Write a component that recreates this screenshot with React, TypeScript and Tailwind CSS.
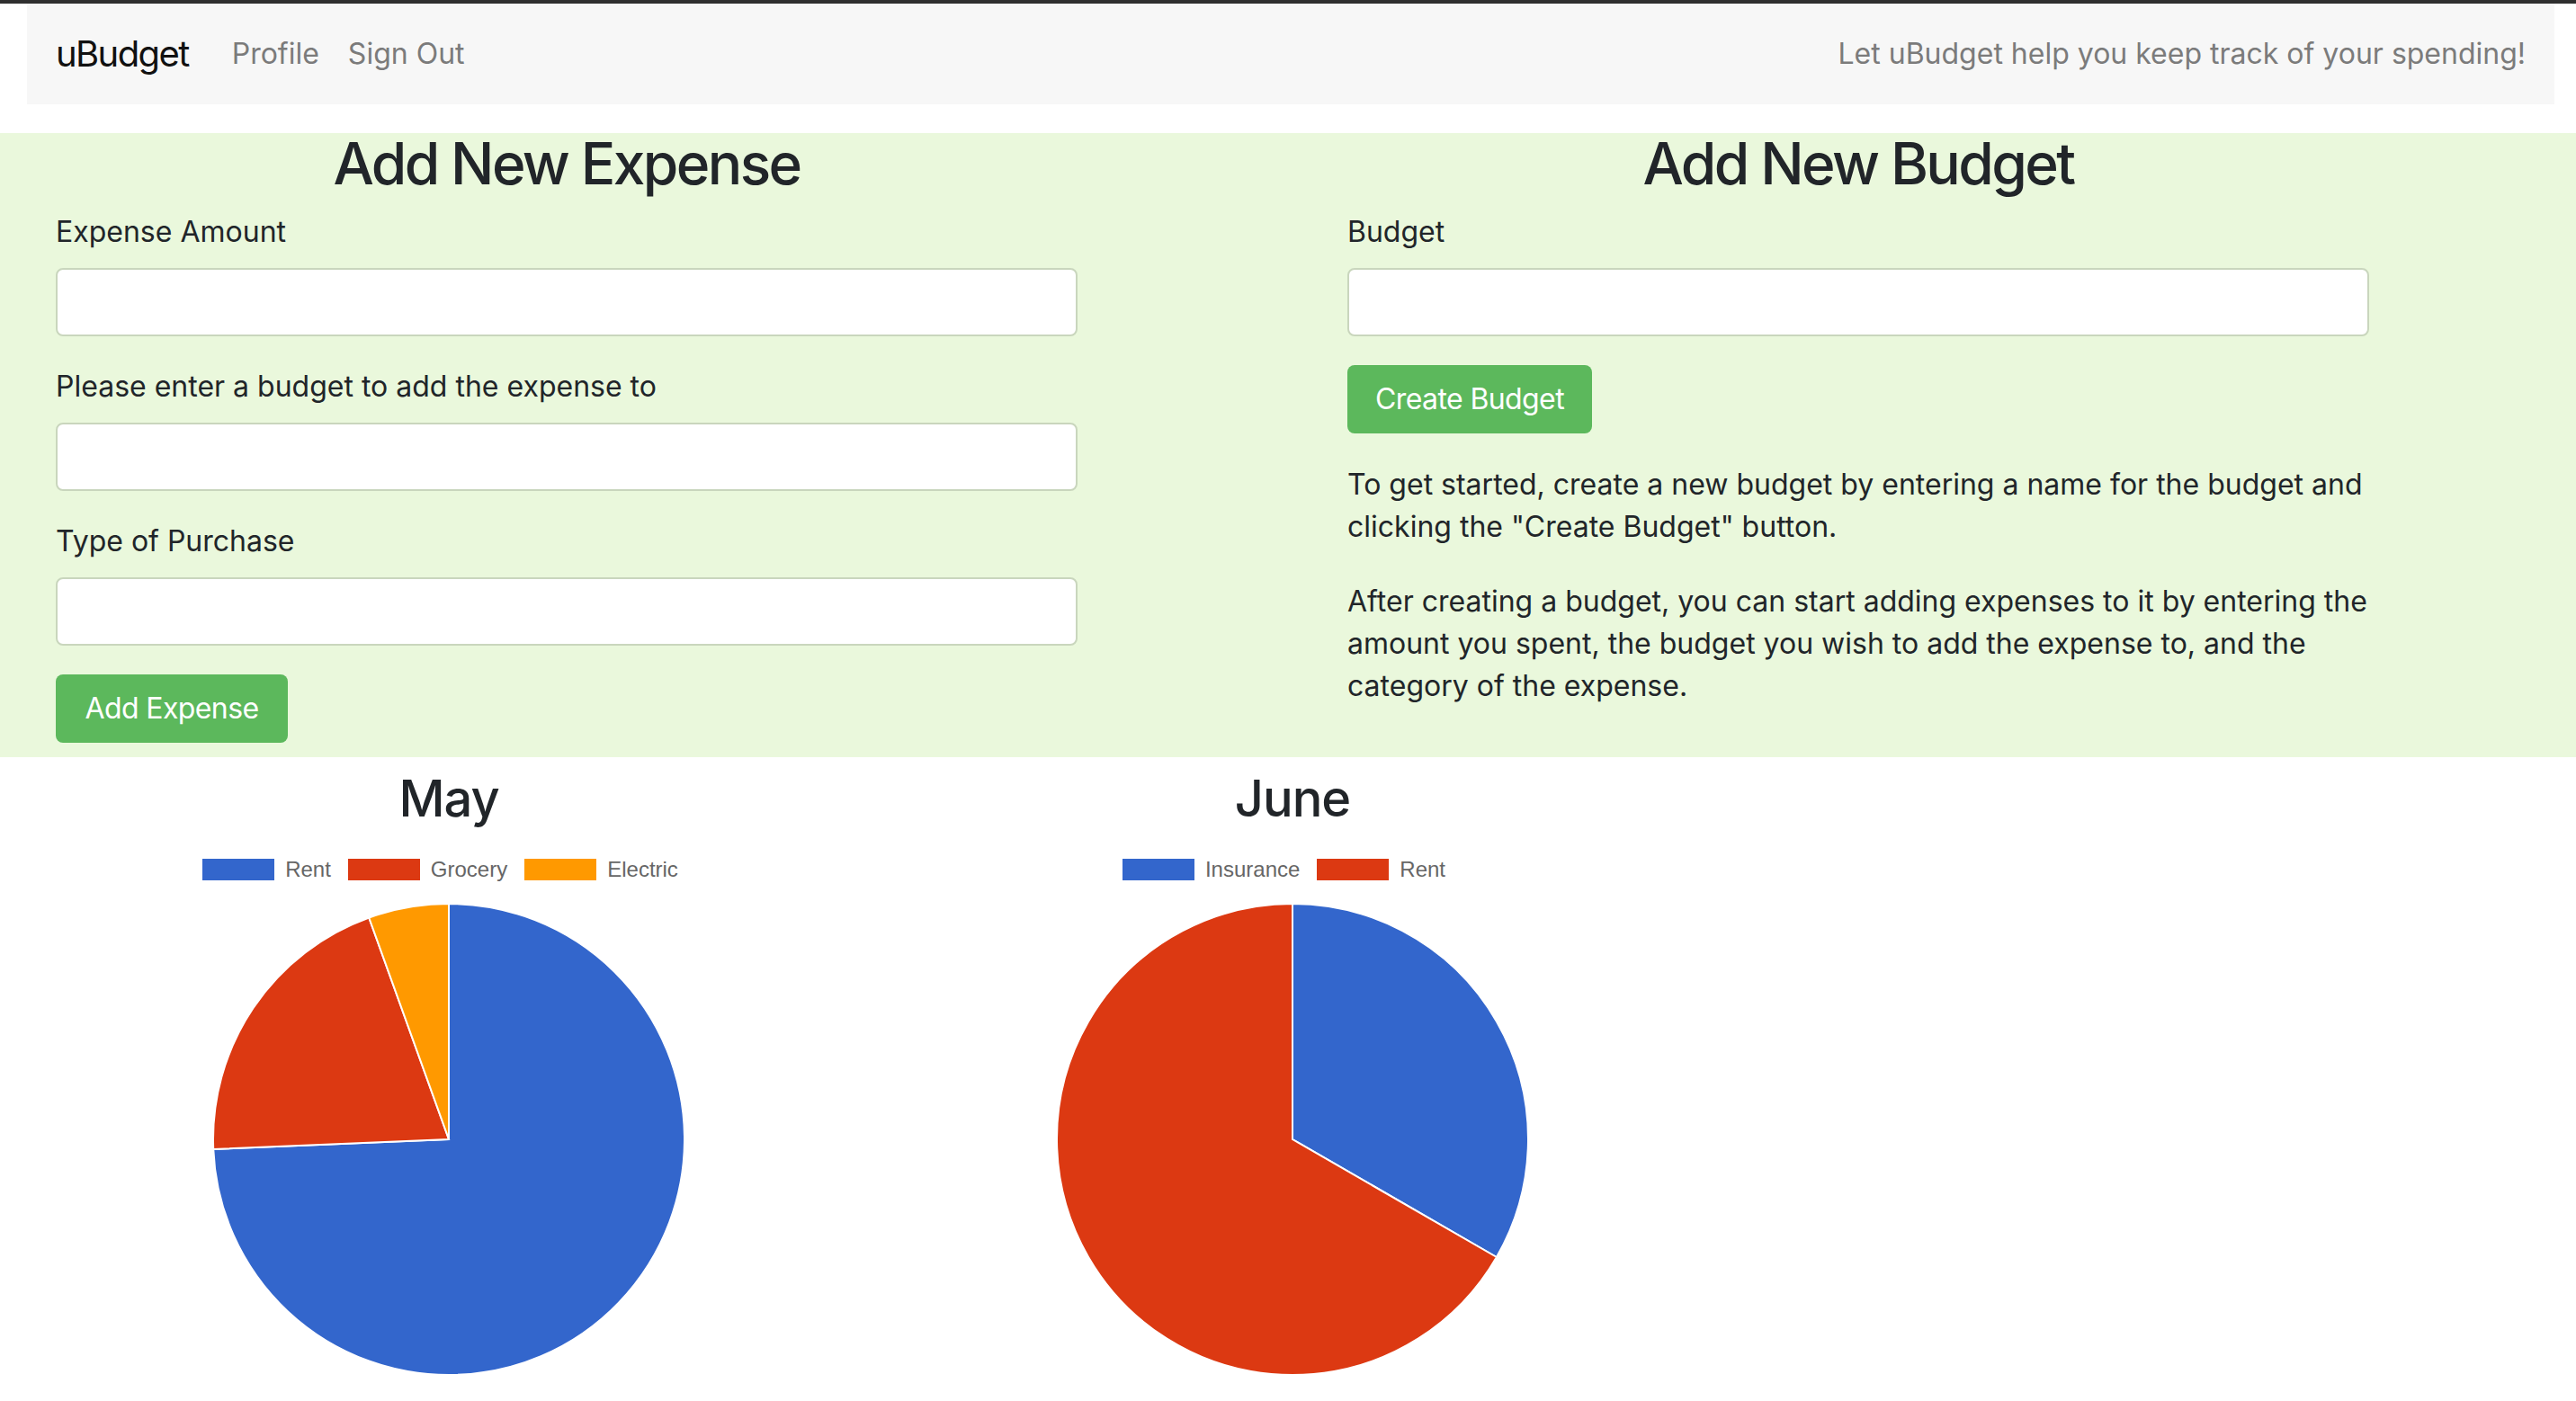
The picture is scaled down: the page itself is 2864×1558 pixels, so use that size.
import React from "react";

type Slice = { label: string; value: number; color: string };

type Chart = { title: string; slices: Slice[] };

const charts: Chart[] = [
  {
    title: "May",
    slices: [
      { label: "Rent", value: 1500, color: "#3366cc" },
      { label: "Grocery", value: 407, color: "#dc3912" },
      { label: "Electric", value: 111, color: "#ff9900" },
    ],
  },
  {
    title: "June",
    slices: [
      { label: "Insurance", value: 500, color: "#3366cc" },
      { label: "Rent", value: 1000, color: "#dc3912" },
    ],
  },
];

const font = { fontFamily: "Inter, 'Noto Sans', sans-serif" };

// point on the circle, angle clockwise from 12 o'clock
const pt = (cx: number, cy: number, r: number, deg: number) => {
  const a = (deg * Math.PI) / 180;
  return [cx + r * Math.sin(a), cy - r * Math.cos(a)];
};

const slicePath = (cx: number, cy: number, r: number, a0: number, a1: number) => {
  const [x0, y0] = pt(cx, cy, r, a0);
  const [x1, y1] = pt(cx, cy, r, a1);
  const large = a1 - a0 > 180 ? 1 : 0;
  return `M${cx} ${cy} L${x0} ${y0} A${r} ${r} 0 ${large} 1 ${x1} ${y1} Z`;
};

const Pie = ({ slices }: { slices: Slice[] }) => {
  const total = slices.reduce((s, x) => s + x.value, 0);
  let start = 0;
  return (
    <svg width="938" height="560" viewBox="0 0 938 560">
      {slices.map((s) => {
        const end = start + (s.value / total) * 360;
        const d = slicePath(469, 288, 262, start, end);
        start = end;
        return <path key={s.label} d={d} fill={s.color} stroke="#fff" strokeWidth="2" />;
      })}
    </svg>
  );
};

const ChartBlock = ({ chart }: { chart: Chart }) => (
  <div className="w-[938px] flex flex-col items-center">
    <h3 className="text-[56px] leading-[67px] font-medium tracking-[-1px] text-[#212529]">{chart.title}</h3>
    <div
      className="mt-[33px] flex items-center h-[24px] text-[24px] leading-[24px] text-[#666]"
      style={{ fontFamily: "'Liberation Sans', Arial, sans-serif" }}
    >
      {chart.slices.map((s) => (
        <div key={s.label} className="flex items-center mr-[19px]">
          <span className="w-[80px] h-[24px]" style={{ backgroundColor: s.color }} />
          <span className="ml-[12px]">{s.label}</span>
        </div>
      ))}
    </div>
    <Pie slices={chart.slices} />
  </div>
);

const Field = ({ label }: { label: string }) => (
  <div className="mb-[32px]">
    <label className="block text-[32px] leading-[48px] mb-[16px] text-[#212529]">{label}</label>
    <input
      type="text"
      className="block w-full h-[76px] bg-white border-2 border-[#c9d6bd] rounded-[8px] px-[24px] text-[32px] outline-none"
    />
  </div>
);

const GreenButton = ({ children, width }: { children: React.ReactNode; width: string }) => (
  <button
    className={`h-[76px] ${width} bg-[#5cb85c] text-white text-[32px] tracking-[-0.6px] rounded-[8px] flex items-center justify-center`}
  >
    {children}
  </button>
);

export default function App() {
  return (
    <div className="min-h-screen bg-white overflow-hidden" style={font}>
      <div className="h-[4px] bg-[#2f2f2f]" />
      <nav className="ml-[30px] mr-[24px] h-[112px] bg-[#f7f7f7] flex items-center px-[32px]">
        <span className="text-[40px] tracking-[-1.6px] text-[#111] mr-[32px]">uBudget</span>
        <a className="px-[16px] text-[32px] text-[#7b7b7b]">Profile</a>
        <a className="px-[16px] text-[32px] text-[#7b7b7b]">Sign Out</a>
        <span className="ml-auto text-[32px] text-[#7b7b7b]">
          Let uBudget help you keep track of your spending!
        </span>
      </nav>

      <section className="mt-[32px] bg-[#eaf8dc] pl-[62px] pb-[16px] flex gap-[300px]">
        <div className="w-[1136px]">
          <h2 className="text-[64px] leading-[67px] font-medium tracking-[-2.6px] text-center text-[#212529] mb-[19px]">
            Add New Expense
          </h2>
          <Field label="Expense Amount" />
          <Field label="Please enter a budget to add the expense to" />
          <Field label="Type of Purchase" />
          <GreenButton width="w-[258px]">Add Expense</GreenButton>
        </div>

        <div className="w-[1136px]">
          <h2 className="text-[64px] leading-[67px] font-medium tracking-[-2.6px] text-center text-[#212529] mb-[19px]">
            Add New Budget
          </h2>
          <Field label="Budget" />
          <GreenButton width="w-[272px]">Create Budget</GreenButton>
          <div className="mt-[33px] text-[32px] leading-[47px] text-[#212529]">
            <p className="mb-[36px]">
              To get started, create a new budget by entering a name for the budget and clicking the
              "Create Budget" button.
            </p>
            <p>
              After creating a budget, you can start adding expenses to it by entering the amount you
              spent, the budget you wish to add the expense to, and the category of the expense.
            </p>
          </div>
        </div>
      </section>

      <section className="px-[30px] pt-[13px] flex">
        {charts.map((c) => (
          <ChartBlock key={c.title} chart={c} />
        ))}
      </section>
    </div>
  );
}
